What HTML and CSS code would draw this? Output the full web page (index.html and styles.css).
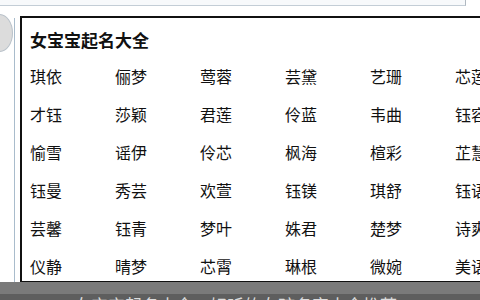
FILE: index.html
```html
<!DOCTYPE html>
<html lang="zh">
<head>
<meta charset="utf-8">
<link rel="stylesheet" href="styles.css">
</head>
<body>
<div class="page">
  <div class="topbar"></div>
  <div class="main">
    <div class="side">
      <div class="knob"></div>
    </div>
    <div class="box">
      <div class="title">女宝宝起名大全</div>
      <div class="names">
        <span>琪依</span><span>俪梦</span><span>莺蓉</span><span>芸黛</span><span>艺珊</span><span>芯莲</span>
        <span>才钰</span><span>莎颖</span><span>君莲</span><span>伶蓝</span><span>韦曲</span><span>钰容</span>
        <span>愉雪</span><span>谣伊</span><span>伶芯</span><span>枫海</span><span>楦彩</span><span>芷慧</span>
        <span>钰曼</span><span>秀芸</span><span>欢萱</span><span>钰镁</span><span>琪舒</span><span>钰语</span>
        <span>芸馨</span><span>钰青</span><span>梦叶</span><span>姝君</span><span>楚梦</span><span>诗爽</span>
        <span>仪静</span><span>晴梦</span><span>芯霄</span><span>琳根</span><span>微婉</span><span>美语</span>
      </div>
    </div>
  </div>
  <div class="footer">
    <div class="caption">一、女宝宝起名大全，好听的女孩名字大全推荐</div>
  </div>
</div>
</body>
</html>
```
FILE: styles.css
```css
html, body {
  margin: 0;
  padding: 0;
  background: #ffffff;
}
.page {
  width: 480px;
  height: 300px;
  overflow: hidden;
  display: flex;
  flex-direction: column;
  font-family: "Noto Sans CJK SC", "Liberation Sans", sans-serif;
  color: #111;
}
.topbar {
  width: 465px;
  height: 5px;
  border-bottom: 1px solid #c3cdd6;
  border-right: 1px solid #b0b8c0;
  background: #f7f9fb;
  flex: none;
}
.main {
  display: flex;
  margin-top: 10px;
  flex: none;
  height: 266px;
}
.side {
  width: 20px;
  flex: none;
  position: relative;
}
.side::after {
  content: "";
  position: absolute;
  left: 14px;
  top: 2px;
  bottom: -30px;
  width: 1px;
  background: #a9bccc;
}
.knob {
  margin-left: -14px;
  margin-top: -2px;
  width: 27px;
  height: 38px;
  border-radius: 50%;
  background: #dcdcdc;
  border: 1px solid #b9c2ca;
  box-sizing: border-box;
}
.box {
  flex: 1;
  border: 2px solid #111;
  border-right: none;
  border-bottom-width: 1px;
  padding: 10px 0 0 8px;
  overflow: hidden;
  background: #fff;
}
.title {
  font-size: 17px;
  font-weight: bold;
  line-height: 24px;
  height: 24px;
  letter-spacing: 0;
}
.names {
  margin-top: 5px;
  display: grid;
  grid-template-columns: repeat(6, 85px);
  grid-auto-rows: 38px;
  font-size: 16px;
  line-height: 38px;
  white-space: nowrap;
}
.footer {
  flex: 1;
  background: #7a7a7a;
  position: relative;
  overflow: hidden;
}
.caption {
  margin-top: 12px;
  padding-left: 40px;
  background: #5e5e5e;
  color: #dcdcdc;
  font-size: 17px;
  line-height: 22px;
  white-space: nowrap;
}
```
